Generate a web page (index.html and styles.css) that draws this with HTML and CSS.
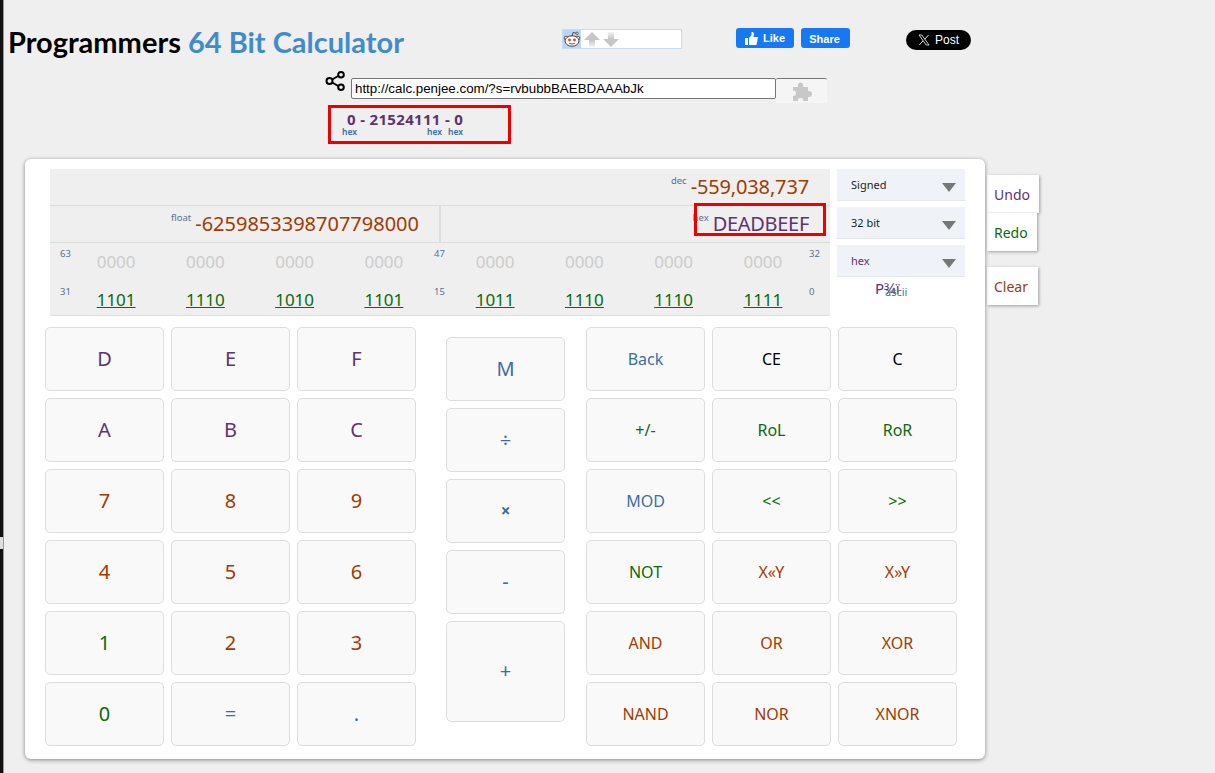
FILE: index.html
```html
<!DOCTYPE html>
<html>
<head>
    <title>Programmers 64 Bit Calculator</title>
    <link rel="stylesheet" href="styles.css">
</head>
<body>
    <div class="edge"><div class="edge-notch"></div></div>

    <div class="top">
        <h1 class="title">Programmers <span>64 Bit Calculator</span></h1>
        <div class="reddit">
            <div class="reddit-logo">
                <svg width="18" height="18" viewBox="0 0 18 18">
                    <circle cx="3" cy="8" r="1.8" fill="#fff" stroke="#333" stroke-width=".8"/>
                    <circle cx="15" cy="8" r="1.8" fill="#fff" stroke="#333" stroke-width=".8"/>
                    <ellipse cx="9" cy="11" rx="7" ry="5.2" fill="#fff" stroke="#333" stroke-width=".9"/>
                    <path d="M9 6 10 2.5 13.5 3.3" fill="none" stroke="#333" stroke-width=".8"/>
                    <circle cx="14" cy="3.3" r="1.2" fill="#fff" stroke="#333" stroke-width=".8"/>
                    <circle cx="6.5" cy="10" r="1.4" fill="#f1440e"/>
                    <circle cx="11.5" cy="10" r="1.4" fill="#f1440e"/>
                    <path d="M6 13.2q3 1.8 6 0" fill="none" stroke="#333" stroke-width=".8"/>
                </svg>
            </div>
            <svg class="arrow" width="16" height="17" viewBox="0 0 16 17">
                <defs>
                    <linearGradient id="fadeUp" x1="0" y1="0" x2="0" y2="1">
                        <stop offset="0.55" stop-color="#c6c6c6"/>
                        <stop offset="1" stop-color="#f4f4f4"/>
                    </linearGradient>
                    <linearGradient id="fadeDown" x1="0" y1="1" x2="0" y2="0">
                        <stop offset="0.55" stop-color="#c6c6c6"/>
                        <stop offset="1" stop-color="#f4f4f4"/>
                    </linearGradient>
                </defs>
                <path d="M8 1 16 9H11V16H5V9H0Z" fill="url(#fadeUp)"/>
            </svg>
            <svg class="arrow" width="16" height="17" viewBox="0 0 16 17"><path d="M5 1H11V8H16L8 16 0 8H5Z" fill="url(#fadeDown)"/></svg>
        </div>
        <div class="fb">
            <a class="fb-btn fb-like">
                <svg width="13" height="13" viewBox="0 0 13 13"><path d="M0 6H3V13H0ZM4 6 6.5 3V0H8Q9.5 1 8.5 5H13L11.5 13H4Z" fill="#fff"/></svg>
                Like
            </a>
            <a class="fb-btn fb-share">Share</a>
        </div>
        <a class="x-post">
            <svg width="12" height="12" viewBox="0 0 12 12">
                <path d="M1 1H3.8L11 11H8.2Z" stroke="#fff" stroke-width=".8" fill="none"/>
                <path d="M10.5 1 6.8 5.2M5 6.9 1.3 11" stroke="#fff" stroke-width=".9" fill="none"/>
            </svg>
            Post
        </a>
    </div>

    <div class="share-row">
        <svg class="share-icon" width="20" height="20" viewBox="0 0 20 20">
            <path d="M4.5 10 15 4M4.5 10 15 16" stroke="#000" stroke-width="2" fill="none"/>
            <circle cx="4.5" cy="10" r="3" fill="#efefef" stroke="#000" stroke-width="2"/>
            <circle cx="16" cy="3.8" r="2.8" fill="#efefef" stroke="#000" stroke-width="2"/>
            <circle cx="16" cy="16.2" r="2.8" fill="#efefef" stroke="#000" stroke-width="2"/>
        </svg>
        <input class="url" type="text" value="http://calc.penjee.com/?s=rvbubbBAEBDAAAbJk">
        <div class="puzzle">
            <svg width="20" height="20" viewBox="0 0 20 20"><path d="M1 6H6Q5 2 8.5 1.5 12 2 11 6H16V10Q20 9.5 20 13 20 16.5 16 16V20H11Q12 17 8.5 17 5 17 6 20H1V15Q4 15.5 4 12 4 9 1 10Z" fill="#c8c8c8"/></svg>
        </div>
    </div>

    <div class="parts">
        <div class="parts-text">0 - 21524111 - 0</div>
        <div class="parts-labels"><span>hex</span><span>hex</span><span>hex</span></div>
    </div>

    <div class="calc-wrap">
        <div class="calc">
            <div class="head">
                <div class="display">
                    <div class="row-dec">
                        <sup class="tag">dec</sup><span class="val brown">-559,038,737</span>
                    </div>
                    <div class="row-two">
                        <div class="cell-float"><sup class="tag">float</sup><span class="val brown">-6259853398707798000</span></div>
                        <div class="cell-hex"><sup class="tag">hex</sup><span class="val purple">DEADBEEF</span><div class="hex-box"></div></div>
                    </div>
                    <div class="bits">
                        <span class="bit-no">63</span>
                        <span class="nib off">0000</span><span class="nib off">0000</span><span class="nib off">0000</span><span class="nib off">0000</span>
                        <span class="bit-no mid">47</span>
                        <span class="nib off">0000</span><span class="nib off">0000</span><span class="nib off">0000</span><span class="nib off">0000</span>
                        <span class="bit-no end">32</span>
                        <span class="bit-no">31</span>
                        <span class="nib on">1101</span><span class="nib on">1110</span><span class="nib on">1010</span><span class="nib on">1101</span>
                        <span class="bit-no mid">15</span>
                        <span class="nib on">1011</span><span class="nib on">1110</span><span class="nib on">1110</span><span class="nib on">1111</span>
                        <span class="bit-no end">0</span>
                    </div>
                </div>
                <div class="options">
                    <div class="select dark">Signed</div>
                    <div class="select dark">32 bit</div>
                    <div class="select purple">hex</div>
                    <div class="ascii">P¾ï<span>ascii</span></div>
                </div>
            </div>

            <div class="pad">
                <div class="keys">
                    <button class="key big purple">D</button><button class="key big purple">E</button><button class="key big purple">F</button>
                    <button class="key big purple">A</button><button class="key big purple">B</button><button class="key big purple">C</button>
                    <button class="key big brown">7</button><button class="key big brown">8</button><button class="key big brown">9</button>
                    <button class="key big brown">4</button><button class="key big brown">5</button><button class="key big brown">6</button>
                    <button class="key big green">1</button><button class="key big brown">2</button><button class="key big brown">3</button>
                    <button class="key big green">0</button><button class="key big blue">=</button><button class="key big blue">.</button>
                </div>
                <div class="ops">
                    <button class="key big blue">M</button>
                    <button class="key big blue">÷</button>
                    <button class="key times blue">×</button>
                    <button class="key big blue">-</button>
                    <button class="key big blue plus">+</button>
                </div>
                <div class="keys">
                    <button class="key blue">Back</button><button class="key black">CE</button><button class="key black">C</button>
                    <button class="key green">+/-</button><button class="key green">RoL</button><button class="key green">RoR</button>
                    <button class="key blue">MOD</button><button class="key green">&lt;&lt;</button><button class="key green">&gt;&gt;</button>
                    <button class="key green">NOT</button><button class="key brown">X«Y</button><button class="key brown">X»Y</button>
                    <button class="key brown">AND</button><button class="key brown">OR</button><button class="key brown">XOR</button>
                    <button class="key brown">NAND</button><button class="key brown">NOR</button><button class="key brown">XNOR</button>
                </div>
            </div>
        </div>

        <div class="side">
            <button class="side-btn undo">Undo</button>
            <button class="side-btn redo">Redo</button>
            <button class="side-btn clear">Clear</button>
        </div>
    </div>
</body>
</html>
```

FILE: styles.css
```css
html, body {
    height: 100%;
}

body {
    margin: 0;
    background-color: #efefef;
    font-family: "Noto Sans", "Open Sans", sans-serif;
    overflow: hidden;
}

.edge {
    position: fixed;
    left: 0;
    top: 0;
    bottom: 0;
    width: 3px;
    background-color: #111;
    border-right: 1px solid #999;
}

.edge-notch {
    position: absolute;
    left: 0;
    top: 537px;
    width: 3px;
    height: 12px;
    background-color: #ddd;
}

/* header */
.top {
    display: flex;
    align-items: flex-start;
    height: 71px;
    padding-left: 8px;
}

.title {
    margin: 23px 0 0;
    width: 554px;
    font-family: "Lato", "Noto Sans", sans-serif;
    font-size: 29px;
    line-height: 38px;
    font-weight: 700;
    color: #000;
}

.title span {
    color: #428bca;
}

.reddit {
    display: flex;
    align-items: center;
    gap: 3px;
    box-sizing: border-box;
    margin-top: 29px;
    width: 120px;
    height: 20px;
    background-color: #fff;
    border: 1px solid #c5dcf2;
}

.reddit-logo {
    display: flex;
    align-items: center;
    justify-content: center;
    width: 18px;
    height: 18px;
    background-color: #bcd6f2;
}

.fb {
    display: flex;
    gap: 7px;
    margin: 28px 0 0 54px;
}

.fb-btn {
    display: flex;
    align-items: center;
    justify-content: center;
    gap: 5px;
    height: 20px;
    border-radius: 3px;
    background-color: #1877f2;
    color: #fff;
    font: bold 11px "Liberation Sans", sans-serif;
}

.fb-like {
    width: 58px;
}

.fb-share {
    box-sizing: border-box;
    width: 49px;
    padding: 2px 2px 0 0;
}

.x-post {
    display: flex;
    align-items: center;
    justify-content: center;
    gap: 5px;
    margin: 30px 0 0 56px;
    width: 65px;
    height: 20px;
    border-radius: 10px;
    background-color: #000;
    color: #fff;
    font: 12px "Liberation Sans", sans-serif;
}

/* share link */
.share-row {
    display: flex;
    align-items: flex-start;
    padding-left: 325px;
    height: 34px;
}

.url {
    box-sizing: border-box;
    margin: 7px 0 0 6px;
    width: 425px;
    height: 21px;
    padding: 0 3px;
    border: 1px solid #767676;
    border-radius: 2px;
    background-color: #fff;
    font: 13.33px "Liberation Sans", sans-serif;
    color: #000;
}

.puzzle {
    display: flex;
    align-items: center;
    justify-content: center;
    box-sizing: border-box;
    margin-top: 7px;
    width: 51px;
    height: 25px;
    background-color: #f5f5f5;
    border-top: 1px solid #767676;
    border-radius: 2px 2px 0 0;
}

.parts {
    box-sizing: border-box;
    margin-left: 328px;
    width: 183px;
    height: 39px;
    border: 3px solid #ee0000;
    color: #5e3370;
}

.parts-text {
    padding: 3px 0 0 16px;
    font-size: 15px;
    line-height: 16px;
    font-weight: 700;
    letter-spacing: 0.33px;
}

.parts-labels {
    display: flex;
    padding-left: 11px;
    font-size: 8.5px;
    line-height: 10px;
    font-weight: 600;
    color: #3a6ea5;
}

.parts-labels span {
    width: 21px;
}

.parts-labels span:first-child {
    width: 85px;
}

/* calculator card */
.calc-wrap {
    display: flex;
    align-items: flex-start;
    margin: 15px 0 0 25px;
}

.calc {
    box-sizing: border-box;
    width: 960px;
    height: 600px;
    padding: 10px 0 0 20px;
    background-color: #fff;
    border-radius: 6px;
    box-shadow: 0 1px 4px rgba(0, 0, 0, 0.45);
    position: relative;
}

.head {
    display: flex;
    gap: 7px;
    padding-left: 5px;
}

.display {
    width: 780px;
    height: 146px;
    background-color: #efefef;
    border-bottom: 1px solid #ddd;
}

.row-dec {
    height: 36px;
    padding-right: 21px;
    text-align: right;
    border-bottom: 1px solid #ddd;
    line-height: 36px;
}

.row-two {
    display: flex;
    height: 36px;
    border-bottom: 1px solid #ddd;
    line-height: 36px;
    text-align: right;
}

.cell-float {
    width: 389px;
    border-right: 2px solid #ddd;
}

.cell-float .val {
    margin-right: 20px;
}

.cell-hex {
    flex: 1;
    padding-right: 21px;
    position: relative;
}

.hex-box {
    position: absolute;
    right: 4px;
    top: -3px;
    width: 132px;
    height: 33px;
    box-sizing: border-box;
    border: 3px solid #ee0000;
}

.tag {
    font-size: 9.5px;
    line-height: 0;
    color: #5a6f95;
    vertical-align: 10px;
    margin-right: 4px;
}

.val {
    font-size: 20px;
}

.row-dec .val {
    letter-spacing: -0.15px;
}

.cell-hex .val {
    letter-spacing: -0.3px;
}

.bits {
    display: grid;
    grid-template-columns: 11.5px repeat(4, 89.25px) 22px repeat(4, 89.25px) 22px;
    grid-template-rows: 38px 34px;
    padding: 0 0 0 10px;
}

.bit-no {
    padding-top: 5px;
    font-size: 9.5px;
    line-height: 12px;
    color: #5a6f95;
}

.bit-no.mid {
    text-align: center;
}

.bit-no.end {
    padding-left: 1.5px;
}

.nib {
    text-align: center;
    font-size: 17px;
    line-height: 38px;
}

.nib.off {
    color: #ccc;
}

.nib.on {
    color: #0a6a0a;
    text-decoration: underline;
}

.options {
    width: 128px;
}

.select {
    box-sizing: border-box;
    height: 32px;
    margin-bottom: 6px;
    padding-left: 14px;
    background-color: #eff2f7;
    border-bottom: 1px solid #e3e6ea;
    font-size: 11px;
    line-height: 31px;
    position: relative;
}

.select::after {
    content: "";
    position: absolute;
    right: 9px;
    top: 14px;
    border-left: 7px solid transparent;
    border-right: 7px solid transparent;
    border-top: 9px solid #777;
}

.select.dark {
    color: #222;
}

.ascii {
    margin-top: -5px;
    padding-left: 38px;
    height: 20px;
    font-size: 15px;
    line-height: 20px;
    color: #5e3370;
    position: relative;
}

.ascii span {
    position: absolute;
    left: 48px;
    top: 4px;
    font-size: 11px;
    color: #5a6f95;
}

/* keys */
.pad {
    display: flex;
    align-items: flex-start;
    margin-top: 11px;
}

.keys {
    display: grid;
    grid-template-columns: repeat(3, 119px);
    grid-auto-rows: 64px;
    gap: 7px;
}

.ops {
    display: grid;
    grid-template-columns: 119px;
    grid-auto-rows: 64px;
    gap: 7px;
    margin: 10px 21px 0 30px;
}

.key {
    padding: 0 0 1px;
    background-color: #f9f9f9;
    border: 1px solid #ddd;
    border-radius: 5px;
    font-family: inherit;
    font-size: 16px;
}

.key.big {
    padding-bottom: 2px;
    font-size: 20px;
}

.key.times {
    font-size: 17px;
    font-weight: 700;
}

.key.plus {
    height: 101px;
}

.purple {
    color: #5e3370;
}

.brown {
    color: #a33a00;
}

.green {
    color: #0a6a0a;
}

.blue {
    color: #3a6ea5;
}

.black {
    color: #000;
}

/* undo, redo, clear */
.side {
    display: flex;
    flex-direction: column;
    align-items: flex-start;
    padding: 16px 0 0 2px;
}

.side-btn {
    box-sizing: border-box;
    height: 38px;
    padding: 0 0 0 7px;
    text-align: left;
    background-color: #fff;
    border: 0;
    box-shadow: 1px 1px 3px rgba(0, 0, 0, 0.35);
    font-family: inherit;
    font-size: 14px;
}

.undo {
    color: #5e3370;
    width: 52px;
}

.redo {
    color: #0a6a0a;
    width: 50px;
}

.clear {
    color: #a33a00;
    width: 51px;
    margin-top: 16px;
}
```
